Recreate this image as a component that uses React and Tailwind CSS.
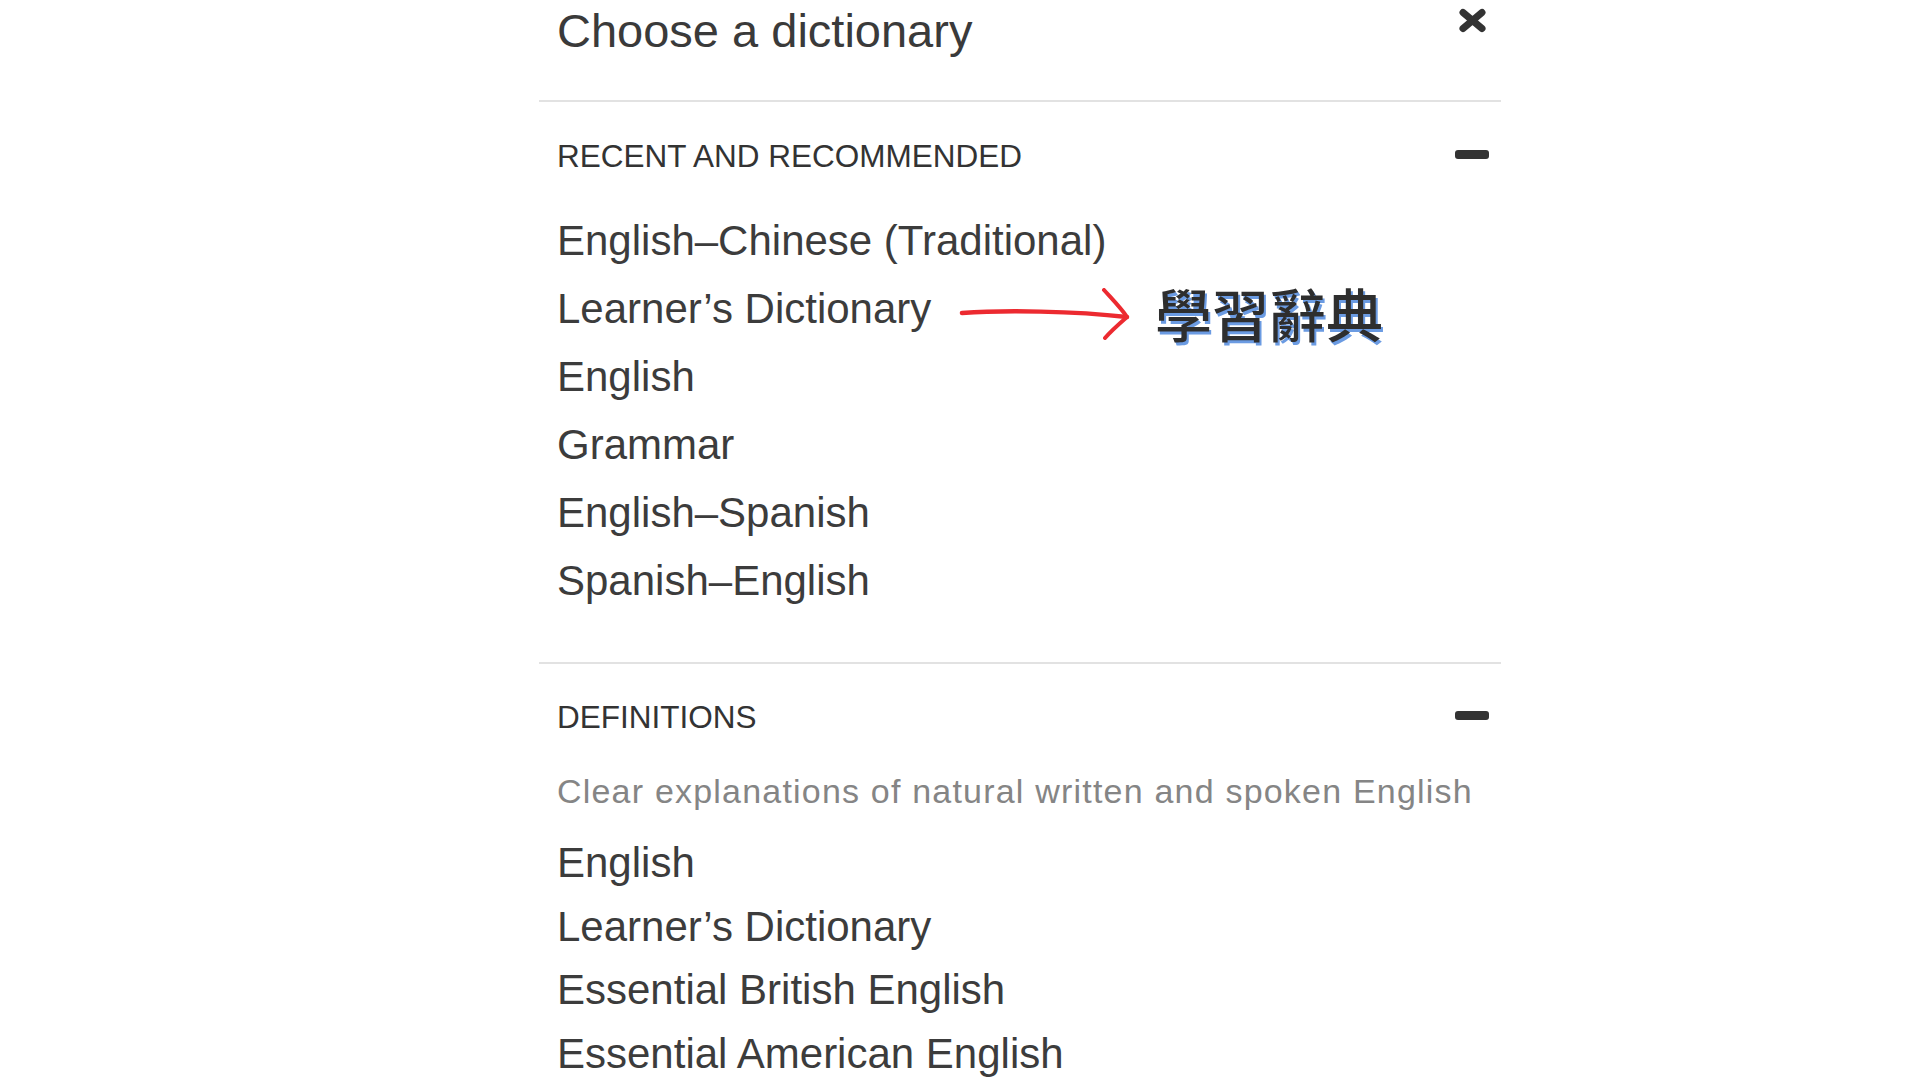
const recent = [
  "English–Chinese (Traditional)",
  "Learner’s Dictionary",
  "English",
  "Grammar",
  "English–Spanish",
  "Spanish–English",
];

const definitions = [
  "English",
  "Learner’s Dictionary",
  "Essential British English",
  "Essential American English",
];

const CloseIcon = () => (
  <svg width="29" height="25" viewBox="0 0 29 25" fill="none">
    <path d="M5 4.5 L24 20.5 M24 4.5 L5 20.5" stroke="#333" strokeWidth="7" strokeLinecap="round" />
  </svg>
);

const MinusIcon = () => <div className="mb-[5px] h-[9px] w-[34px] rounded-[3px] bg-[#333]" />;

const Annotation = () => (
  <>
    <svg className="absolute left-[402px] top-[13px]" width="172" height="52" viewBox="0 0 172 52" fill="none">
      <path d="M3 25 C 45 22, 115 23, 168 29" stroke="#ec2a30" strokeWidth="4.5" strokeLinecap="round" />
      <path d="M145 2 C 154 12, 162 20, 168 29 C 160 36, 152 43, 146 50" stroke="#ec2a30" strokeWidth="4" strokeLinecap="round" strokeLinejoin="round" />
    </svg>
    <span className="absolute left-[598px] top-[9px] whitespace-nowrap font-['Noto_Sans_CJK_TC','Noto_Sans_CJK_SC',sans-serif] text-[57px] font-medium leading-none text-[#2e2e2e] [text-shadow:2px_3px_0_#6b9be2]">
      學習辭典
    </span>
  </>
);

const SectionHeading = ({ title }) => (
  <div className="flex items-center justify-between">
    <h2 className="text-[31.5px] leading-[31px] text-[#333]">{title}</h2>
    <MinusIcon />
  </div>
);

export default function App() {
  return (
    <div className="h-[1080px] overflow-hidden bg-white font-['Liberation_Sans',Arial,sans-serif]">
      <div className="ml-[539px] w-[962px]">
        <header className="flex h-[100px] items-start justify-between pl-[18px] pr-[14px] pt-[8px]">
          <h1 className="text-[47px] leading-[46px] text-[#3a3a3a]">Choose a dictionary</h1>
          <CloseIcon />
        </header>
        <div className="h-[2px] bg-[#e2e2e2]" />

        <section className="pb-[47px] pl-[18px] pr-[12px] pt-[39px]">
          <SectionHeading title="RECENT AND RECOMMENDED" />
          <ul className="mt-[35px]">
            {recent.map((item, i) => (
              <li key={item} className="relative text-[42px] leading-[68px] text-[#3c3c3c]">
                {item}
                {i === 1 && <Annotation />}
              </li>
            ))}
          </ul>
        </section>
        <div className="h-[2px] bg-[#e2e2e2]" />

        <section className="pl-[18px] pr-[12px] pt-[38px]">
          <SectionHeading title="DEFINITIONS" />
          <p className="mt-[41px] text-[34px] leading-[34px] tracking-[1.2px] text-[#858585]">
            Clear explanations of natural written and spoken English
          </p>
          <ul className="mt-[23px]">
            {definitions.map((item) => (
              <li key={item} className="text-[42px] leading-[63.6px] text-[#3c3c3c]">
                {item}
              </li>
            ))}
          </ul>
        </section>
      </div>
    </div>
  );
}
